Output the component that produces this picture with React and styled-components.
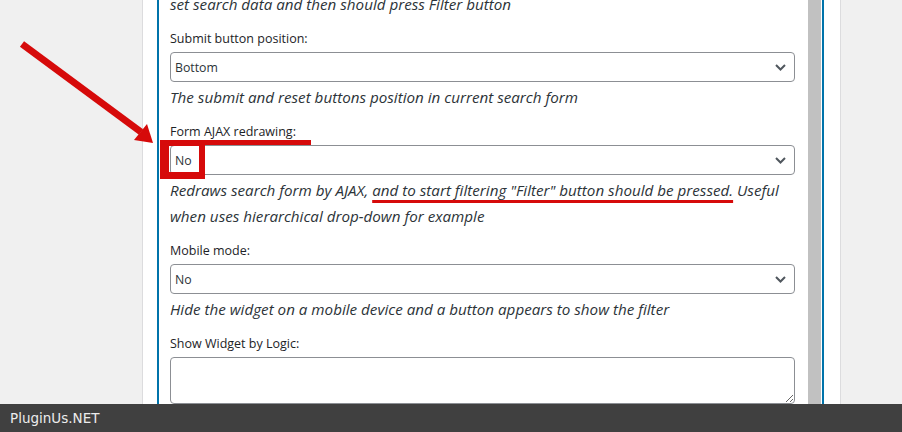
import React from 'react';
import styled, { createGlobalStyle } from 'styled-components';

const Global = createGlobalStyle`
  html, body { margin: 0; padding: 0; background: #f0f0f0; }
  body { font-family: "Open Sans", "Noto Sans", sans-serif; }
  * { box-sizing: border-box; }
`;

const Page = styled.div`
  position: relative;
  width: 902px;
  height: 432px;
  overflow: hidden;
  display: flex;
  flex-direction: column;
  background: #f0f0f0;
`;

const Stage = styled.div`
  flex: 1;
  min-height: 0;
  display: flex;
  overflow: hidden;
`;

const Gutter = styled.div`
  width: 142px;
  flex: none;
`;

const Panel = styled.div`
  width: 699px;
  flex: none;
  display: flex;
  background: #fff;
  border-left: 1px solid #dcdcde;
  border-right: 1px solid #dcdcde;
  padding: 0 16px 0 14px;
`;

const Frame = styled.div`
  flex: 1;
  display: flex;
  border-left: 2px solid #0073aa;
  border-right: 2px solid #0073aa;
`;

const Content = styled.div`
  flex: 1;
  min-width: 0;
  padding: 0 13px 0 11px;
  margin-top: -11px;
`;

const Scrollbar = styled.div`
  width: 13px;
  flex: none;
  margin-right: 1px;
  background: #c1c1c1;
`;

const Field = styled.div`
  position: relative;
  margin-bottom: 12px;
`;

const Label = styled.div`
  font-size: 12.5px;
  line-height: 20px;
  color: #1d2327;
  margin-bottom: 3px;
`;

const SelectBox = styled.div`
  height: 30px;
  border: 1px solid #8c8f94;
  border-radius: 4px;
  background: #fff;
  display: flex;
  align-items: center;
  justify-content: space-between;
  padding: 0 8px 0 4px;
  font-size: 12.3px;
  color: #2c3338;
`;

const Desc = styled.div`
  margin-top: 2px;
  font-size: 15.2px;
  font-style: italic;
  line-height: 26px;
  color: #2c3338;
`;

const Marked = styled.span`
  text-decoration: underline;
  text-decoration-color: #d60a0a;
  text-decoration-thickness: 2.5px;
  text-underline-offset: 4px;
`;

const TextArea = styled.textarea`
  display: block;
  width: 100%;
  height: 47px;
  border: 1px solid #8c8f94;
  border-radius: 4px;
  font-family: inherit;
  font-size: 12px;
  padding: 4px;
  outline: none;
  background: #fff;
`;

const LabelUnderline = styled.div`
  position: absolute;
  left: 0;
  top: 18px;
  width: 141px;
  height: 5px;
  background: #d60a0a;
`;

const RedBox = styled.div`
  position: absolute;
  left: -10px;
  top: 18px;
  width: 45px;
  height: 39px;
  border-style: solid;
  border-color: #d60a0a;
  border-width: 6px 6px 7px 9px;
`;

const Overlay = styled.svg`
  position: absolute;
  left: 0;
  top: 0;
  pointer-events: none;
`;

const Footer = styled.div`
  height: 28px;
  flex: none;
  background: #404040;
  color: #ececec;
  font-family: "DejaVu Sans", sans-serif;
  font-size: 13.5px;
  line-height: 28px;
  padding-left: 10px;
`;

const Chevron = () => (
  <svg width="11" height="7" viewBox="0 0 11 7">
    <path d="M1 1 L5.5 5.5 L10 1" fill="none" stroke="#50575e" strokeWidth="2" />
  </svg>
);

const Select = ({ value }) => (
  <SelectBox>
    <span>{value}</span>
    <Chevron />
  </SelectBox>
);

export default function App() {
  return (
    <>
      <Global />
      <Page>
        <Stage>
          <Gutter />
          <Panel>
            <Frame>
              <Content>
                <Field>
                  <Desc>set search data and then should press Filter button</Desc>
                </Field>
                <Field>
                  <Label>Submit button position:</Label>
                  <Select value="Bottom" />
                  <Desc>The submit and reset buttons position in current search form</Desc>
                </Field>
                <Field>
                  <Label>Form AJAX redrawing:</Label>
                  <Select value="No" />
                  <Desc>
                    Redraws search form by AJAX,{' '}
                    <Marked>and to start filtering "Filter" button should be pressed.</Marked>{' '}
                    Useful when uses hierarchical drop-down for example
                  </Desc>
                  <LabelUnderline />
                  <RedBox />
                </Field>
                <Field>
                  <Label>Mobile mode:</Label>
                  <Select value="No" />
                  <Desc>Hide the widget on a mobile device and a button appears to show the filter</Desc>
                </Field>
                <Field>
                  <Label>Show Widget by Logic:</Label>
                  <TextArea />
                </Field>
              </Content>
              <Scrollbar />
            </Frame>
          </Panel>
        </Stage>
        <Footer>PluginUs.NET</Footer>
        <Overlay width="902" height="432" viewBox="0 0 902 432">
          <line x1="22" y1="44" x2="141" y2="132" stroke="#d60a0a" strokeWidth="7" />
          <polygon points="153,143 134,140 147,124" fill="#d60a0a" />
        </Overlay>
      </Page>
    </>
  );
}
